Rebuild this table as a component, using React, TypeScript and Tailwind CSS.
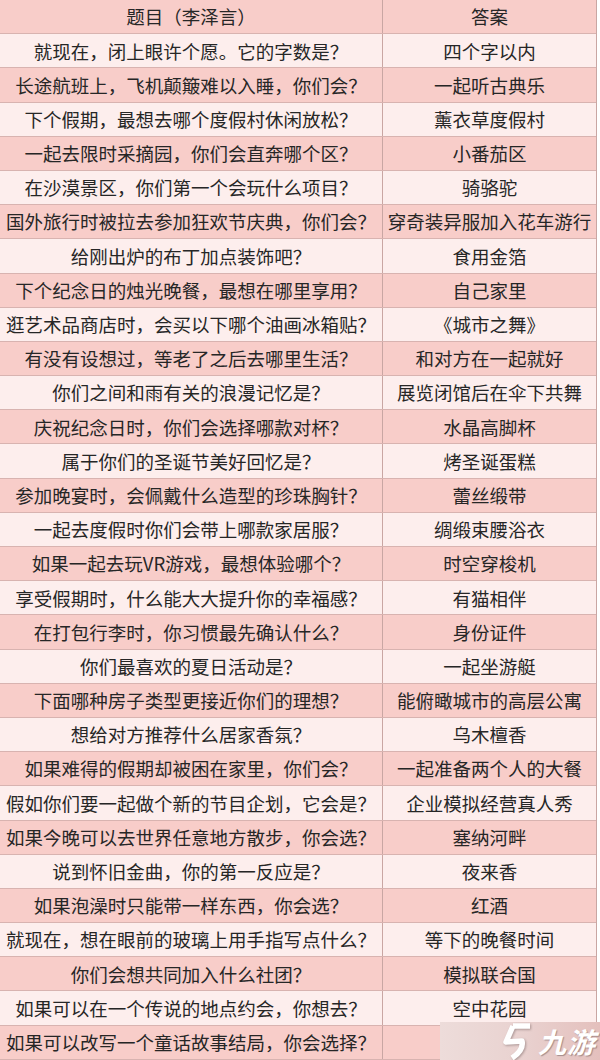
import React from "react";

const rows: [string, string][] = [
  ["就现在，闭上眼许个愿。它的字数是？", "四个字以内"],
  ["长途航班上，飞机颠簸难以入睡，你们会？", "一起听古典乐"],
  ["下个假期，最想去哪个度假村休闲放松？", "薰衣草度假村"],
  ["一起去限时采摘园，你们会直奔哪个区？", "小番茄区"],
  ["在沙漠景区，你们第一个会玩什么项目？", "骑骆驼"],
  ["国外旅行时被拉去参加狂欢节庆典，你们会？", "穿奇装异服加入花车游行"],
  ["给刚出炉的布丁加点装饰吧？", "食用金箔"],
  ["下个纪念日的烛光晚餐，最想在哪里享用？", "自己家里"],
  ["逛艺术品商店时，会买以下哪个油画冰箱贴？", "《城市之舞》"],
  ["有没有设想过，等老了之后去哪里生活？", "和对方在一起就好"],
  ["你们之间和雨有关的浪漫记忆是？", "展览闭馆后在伞下共舞"],
  ["庆祝纪念日时，你们会选择哪款对杯？", "水晶高脚杯"],
  ["属于你们的圣诞节美好回忆是？", "烤圣诞蛋糕"],
  ["参加晚宴时，会佩戴什么造型的珍珠胸针？", "蕾丝缎带"],
  ["一起去度假时你们会带上哪款家居服？", "绸缎束腰浴衣"],
  ["如果一起去玩VR游戏，最想体验哪个？", "时空穿梭机"],
  ["享受假期时，什么能大大提升你的幸福感？", "有猫相伴"],
  ["在打包行李时，你习惯最先确认什么？", "身份证件"],
  ["你们最喜欢的夏日活动是？", "一起坐游艇"],
  ["下面哪种房子类型更接近你们的理想？", "能俯瞰城市的高层公寓"],
  ["想给对方推荐什么居家香氛？", "乌木檀香"],
  ["如果难得的假期却被困在家里，你们会？", "一起准备两个人的大餐"],
  ["假如你们要一起做个新的节目企划，它会是？", "企业模拟经营真人秀"],
  ["如果今晚可以去世界任意地方散步，你会选？", "塞纳河畔"],
  ["说到怀旧金曲，你的第一反应是？", "夜来香"],
  ["如果泡澡时只能带一样东西，你会选？", "红酒"],
  ["就现在，想在眼前的玻璃上用手指写点什么？", "等下的晚餐时间"],
  ["你们会想共同加入什么社团？", "模拟联合国"],
  ["如果可以在一个传说的地点约会，你想去？", "空中花园"],
  ["如果可以改写一个童话故事结局，你会选择？", ""],
];

function Row({ q, a, pink }: { q: string; a: string; pink: boolean }) {
  return (
    <div
      className={`flex flex-1 border-b border-[#d8b3b0] ${pink ? "bg-[#f8cdc9]" : "bg-[#fdeeed]"}`}
    >
      <div className="w-[383px] flex items-center justify-center border-r border-[#c9a6a3] whitespace-nowrap">
        {q}
      </div>
      <div className="flex-1 flex items-center justify-center whitespace-nowrap">{a}</div>
    </div>
  );
}

export default function App() {
  return (
    <div
      className="relative w-[600px] h-[1060px] bg-white overflow-hidden text-[18.5px] leading-none text-[#262626]"
      style={{ fontFamily: '"Noto Sans CJK SC", "Noto Sans", sans-serif' }}
    >
      <div className="w-[597px] h-[1060px] flex flex-col border-r border-[#c9a6a3]">
        <div className="flex flex-1 border-b border-[#d8b3b0] bg-[#f8cdc9]">
          <div className="w-[383px] flex items-center justify-center border-r border-[#c9a6a3]">
            题目（李泽言）
          </div>
          <div className="flex-1 flex items-center justify-center">答案</div>
        </div>
        {rows.map(([q, a], i) => (
          <Row key={i} q={q} a={a} pink={i % 2 === 1} />
        ))}
      </div>
      <div className="absolute left-[440px] top-[1022px] right-0 bottom-0 bg-gradient-to-r from-[#eddcda] via-[#e9d2d0] to-[#e4c0bd] flex items-center justify-end pr-[4px] gap-[6px]">
        <svg
          width="32"
          height="38"
          viewBox="0 0 32 38"
          className="drop-shadow-[1px_1px_1px_rgba(120,100,100,0.55)]"
        >
          <path
            d="M13 4 L30 4 M13 4 L6 20 L22 19 Q24 28 12 36"
            fill="none"
            stroke="white"
            strokeWidth="5.5"
            strokeLinejoin="round"
            strokeLinecap="butt"
          />
        </svg>
        <span className="text-white italic font-bold text-[28px] leading-none tracking-[1px] [text-shadow:1px_1px_1px_rgba(120,100,100,0.6)]">
          九游
        </span>
      </div>
    </div>
  );
}
